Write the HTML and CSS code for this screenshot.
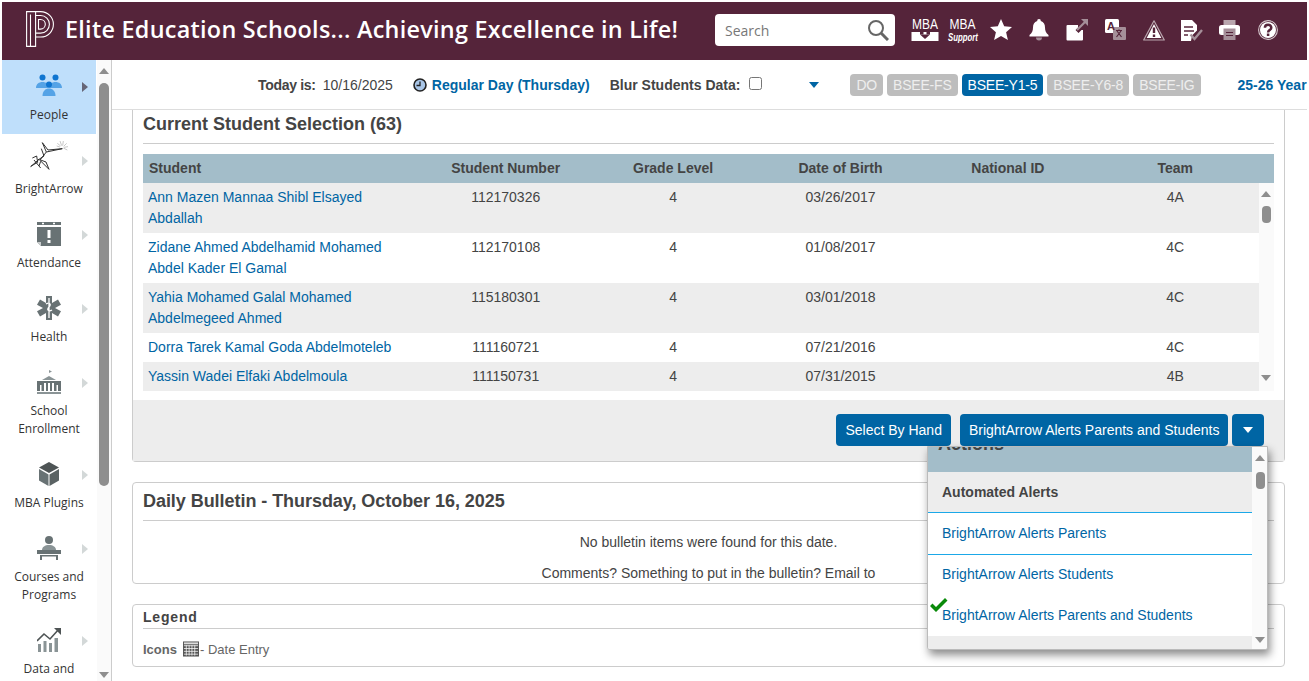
FILE: index.html
```html
<!DOCTYPE html>
<html lang="en">
<head>
<meta charset="utf-8">
<title>Elite Education Schools</title>
<link rel="stylesheet" href="styles.css">
</head>
<body>
<header class="header">
  <svg class="logo" viewBox="0 0 28 36" width="28" height="36" fill="none" stroke="#fff" stroke-width="1.100">
    <path d="M.6.6h9v34.800h-9z"/>
    <path d="M4.500 3.500v31.500"/>
    <path d="M9.600.6h5c7.300 0 12.800 5.700 12.800 12.700s-5.500 12.700-12.800 12.700h-5"/>
    <path d="M9.600 4.500h5c5 0 8.800 3.900 8.800 8.800s-3.800 8.800-8.800 8.800h-5"/>
    <path d="M12.500 8.500h2c2.700 0 4.800 2.100 4.800 4.800s-2.100 4.800-4.800 4.800h-2z"/>
  </svg>
  <h1 class="title">Elite Education Schools... Achieving Excellence in Life!</h1>
  <div class="search">
    <span>Search</span>
    <svg viewBox="0 0 22 22" width="22" height="22" fill="none" stroke="#666" stroke-width="2"><circle cx="9" cy="9" r="7"/><path d="M14 14l7 7" stroke-width="3"/></svg>
  </div>
  <nav class="tools">
    <span class="tool"><svg width="28" height="24" viewBox="0 0 28 24"><text x="1" y="9" transform="scale(1 1.250)" class="mba">MBA</text><path fill="#fff" d="M.5 14h8.500v2.500h3.500V14h3v2.500H19V14h8.500v9H.5z"/><path fill="#55243a" d="M9 16.500h10L14 21z"/></svg></span>
    <span class="tool"><svg width="31" height="24" viewBox="0 0 31 24"><text x="1.500" y="9" transform="scale(1 1.250)" class="mba">MBA</text><text x="0" y="17" transform="scale(1 1.350)" class="sup">Support</text></svg></span>
    <span class="tool"><svg width="22" height="22" viewBox="0 0 22 22"><path fill="#fff" d="M11 0l3.200 7.300 7.800.7-5.900 5.200 1.800 7.800L11 17l-6.900 4 1.800-7.800L0 8l7.800-.7z"/></svg></span>
    <span class="tool"><svg width="20" height="22" viewBox="0 0 20 22"><path fill="#fff" d="M10 0a1.800 1.800 0 011.800 2c3 .8 4.200 3.400 4.200 6.500 0 3.300 1 5.500 3.500 7.500v1.500H.5V16C3 14 4 11.800 4 8.500 4 5.400 5.200 2.800 8.200 2A1.800 1.800 0 0110 0z"/><path fill="#a58f99" d="M7 18.500h6a3 3 0 01-6 0z"/></svg></span>
    <span class="tool"><svg width="22" height="22" viewBox="0 0 22 22"><path fill="#fff" d="M1.500 6H12v2.500L9.500 11l3 3 3-3 1.500 0v9.500a1 1 0 01-1 1H1.500a1 1 0 01-1-1V7a1 1 0 011-1z"/><path fill="none" stroke="#a58f99" stroke-width="2.200" d="M11 11l8-8"/><path fill="#a58f99" d="M15 0h7v7z"/></svg></span>
    <span class="tool"><svg width="22" height="22" viewBox="0 0 22 22"><rect x="8" y="8" width="13" height="13" rx="1" fill="#a58f99"/><rect x="0" y="0" width="14" height="14" rx="1.500" fill="#fff"/><path fill="#a58f99" d="M8 8h6v6H8z"/><text x="6" y="11" text-anchor="middle" class="tr-a">A</text><path d="M11 11.500h6M14 10.500v1M12 12l4.500 6M16 12l-4.500 6" stroke="#55243a" stroke-width="1.200" fill="none"/></svg></span>
    <span class="tool"><svg width="22" height="21" viewBox="0 0 22 21"><path fill="none" stroke="#b9a6ae" stroke-width="1.200" stroke-linejoin="round" d="M11 .8L21.300 20H.7z"/><path fill="#fff" d="M11 4L18.300 18H3.700z"/><path fill="none" stroke="#55243a" stroke-width="2.400" d="M11 7.500v5.500M11 14.500v2.500"/></svg></span>
    <span class="tool"><svg width="22" height="21" viewBox="0 0 22 21"><path fill="#fff" d="M0 0h11l5 5v5.500l-5 5 -1 5.500H0z"/><path stroke="#55243a" stroke-width="1.500" d="M3 7h9M3 11h10M3 15h4"/><path fill="none" stroke="#a58f99" stroke-width="2.400" d="M9.500 14.500l4 4.500L21 10"/></svg></span>
    <span class="tool"><svg width="21" height="20" viewBox="0 0 21 20"><path fill="#b9a6ae" d="M4.500 0h12v6h-12z"/><rect y="5" width="21" height="10" rx="2.500" fill="#fff"/><path fill="#a58f99" d="M4.500 8.500h12V20h-12z"/><path stroke="#55243a" stroke-width="1.200" d="M7 12.500h7M7 15.500h7"/></svg></span>
    <span class="tool"><svg width="20" height="20" viewBox="0 0 20 20"><circle cx="10" cy="10" r="9.400" fill="none" stroke="#d5c8cd" stroke-width="1.100"/><circle cx="10" cy="10" r="8" fill="#fff"/><path fill="none" stroke="#55243a" stroke-width="2.500" d="M6.900 7.700c0-4 6.400-4 6.400 0 0 2.300-3.200 2.500-3.200 4.700"/><path stroke="#55243a" stroke-width="2.500" d="M10.100 13.500v2.500"/></svg></span>
  </nav>
</header>

<div class="shell">
  <aside class="side">
    <ul class="menu">
      <li class="item on">
        <div class="ico-row"><svg width="26" height="24" viewBox="0 0 26 24"><circle cx="6.500" cy="3.500" r="3" fill="#0f75d0"/><circle cx="19.500" cy="3.500" r="3" fill="#0f75d0"/><path fill="#55a3e6" d="M0 14c0-4 3-6 6.500-6S13 10 13 14zM13 14c0-4 3-6 6.500-6s6.500 2 6.500 6z"/><circle cx="13" cy="10.500" r="3" fill="#0f75d0"/><path fill="#55a3e6" d="M6.500 22c0-5 3-7.500 6.500-7.500s6.500 2.500 6.500 7.500z"/></svg><i class="arr"></i></div>
        <span>People</span>
      </li>
      <li class="item">
        <div class="ico-row"><svg class="ba" width="40" height="30" viewBox="25 15 120 90" fill="none" stroke="#222" stroke-width="2.800"><path d="M65 20L77 48 125 38 82 42z"/><path d="M62 38L70 60 52 72M77 48L58 72"/><path d="M30 92L55 70 85 100M35 66l13-6 3 19-21 12M60 72l16 6 9 22M40 72l20 24M55 90l5-14"/><path stroke="#aaa" stroke-width="2" d="M108 30l10 3M110 22l10 8M118 15l5 14M128 15l-2 14M138 22l-9 9M142 32l-12 2M140 42l-12-6"/></svg><i class="arr"></i></div>
        <span>BrightArrow</span>
      </li>
      <li class="item">
        <div class="ico-row"><svg width="24" height="24" viewBox="0 0 24 24"><path fill="#687274" d="M0 0h24v3H0zM0 5h24v19H4l-4-4z"/><path fill="#fff" d="M5 .8h2v1.500H5zM16 .8h2v1.500h-2zM10.500 8h3v8h-3zM10.500 18h3v3h-3z"/><path fill="#c9cdce" d="M0 20h4v4z"/></svg><i class="arr"></i></div>
        <span>Attendance</span>
      </li>
      <li class="item">
        <div class="ico-row"><svg width="24" height="24" viewBox="0 0 24 24"><path fill="#687274" d="M9 0h6v7l6-3.500 3 5.300-6 3.200 6 3.200-3 5.300-6-3.500v7H9v-7l-6 3.500-3-5.300 6-3.200L0 8.800l3-5.300 6 3.500z"/><path stroke="#fff" stroke-width="1.300" fill="none" d="M12 2v20M9 8c3-2 6 0 3 3s0 5 3 3"/></svg><i class="arr"></i></div>
        <span>Health</span>
      </li>
      <li class="item tall">
        <div class="ico-row"><svg width="24" height="24" viewBox="0 0 24 24"><path fill="#8a9496" d="M12 0l3 1.500-3 1.500v3l-7 4h14l-7-4z"/><path fill="#687274" d="M0 11h24v10H0z"/><path fill="#fff" d="M7 13h2v8H7zM11 13h2v8h-2zM15 13h2v8h-2zM3 15h1.500v6H3zM19.500 15H21v6h-1.500z"/><path fill="#8a9496" d="M0 22h24v2H0z"/></svg><i class="arr"></i></div>
        <span>School<br>Enrollment</span>
      </li>
      <li class="item">
        <div class="ico-row"><svg width="20" height="24" viewBox="0 0 20 24"><path fill="#4e5455" d="M10 0l10 5.500L10 11 0 5.500z"/><path fill="#687274" d="M0 7l9.500 5.500V24L0 18.500z"/><path fill="#5a6263" d="M20 7l-9.500 5.500V24L20 18.500z"/></svg><i class="arr"></i></div>
        <span>MBA Plugins</span>
      </li>
      <li class="item tall">
        <div class="ico-row"><svg width="24" height="24" viewBox="0 0 24 24"><circle cx="12" cy="4" r="4" fill="#687274"/><path fill="#8a9496" d="M5 14c0-3 3-5 7-5s7 2 7 5z"/><path fill="#687274" d="M0 14h24v4H0zM3 19h18v1.500H3zM3 20h2v4H3zM19 20h2v4h-2z"/></svg><i class="arr"></i></div>
        <span>Courses and<br>Programs</span>
      </li>
      <li class="item">
        <div class="ico-row"><svg width="24" height="24" viewBox="0 0 24 24"><path fill="#8a9496" d="M1 16h3v8H1zM6.500 13h3v11h-3zM12 15h3v9h-3zM17.500 10H21v14h-3.500z"/><path fill="none" stroke="#4e5455" stroke-width="1.600" d="M0 13l7-7 6 5 9-10"/><path fill="#4e5455" d="M17 0h7v7z"/></svg><i class="arr"></i></div>
        <span>Data and</span>
      </li>
    </ul>
    <div class="rail">
      <i class="sb-up"></i>
      <i class="thumb"></i>
      <i class="sb-down"></i>
    </div>
  </aside>

  <main class="main">
    <div class="topbar">
      <b class="today">Today is:</b><span class="date">10/16/2025</span>
      <svg class="clock" width="14" height="14" viewBox="0 0 14 14"><circle cx="7" cy="7" r="6" fill="#a9c6e8" stroke="#222" stroke-width="1.600"/><path d="M7 3.500V7.500H3.500" fill="none" stroke="#222" stroke-width="1.300"/></svg>
      <a class="day">Regular Day (Thursday)</a>
      <b class="blur">Blur Students Data:</b>
      <input class="check" type="checkbox" aria-label="Blur Students Data">
      <i class="tri"></i>
      <div class="pills">
        <span class="pill">DO</span><span class="pill">BSEE-FS</span><span class="pill active">BSEE-Y1-5</span><span class="pill">BSEE-Y6-8</span><span class="pill">BSEE-IG</span>
      </div>
      <a class="year">25-26 Year</a>
    </div>

    <section class="box selection">
      <div class="sel-body">
        <h2>Current Student Selection (63)</h2>
        <div class="thead">
          <span class="c-name">Student</span><span>Student Number</span><span>Grade Level</span><span>Date of Birth</span><span>National ID</span><span>Team</span>
        </div>
        <div class="tscroll">
          <div class="rows">
            <div class="row g"><a class="c-name">Ann Mazen Mannaa Shibl Elsayed Abdallah</a><span>112170326</span><span>4</span><span>03/26/2017</span><span></span><span>4A</span></div>
            <div class="row"><a class="c-name">Zidane Ahmed Abdelhamid Mohamed Abdel Kader El Gamal</a><span>112170108</span><span>4</span><span>01/08/2017</span><span></span><span>4C</span></div>
            <div class="row g"><a class="c-name">Yahia Mohamed Galal Mohamed Abdelmegeed Ahmed</a><span>115180301</span><span>4</span><span>03/01/2018</span><span></span><span>4C</span></div>
            <div class="row"><a class="c-name">Dorra Tarek Kamal Goda Abdelmoteleb</a><span>111160721</span><span>4</span><span>07/21/2016</span><span></span><span>4C</span></div>
            <div class="row g"><a class="c-name">Yassin Wadei Elfaki Abdelmoula</a><span>111150731</span><span>4</span><span>07/31/2015</span><span></span><span>4B</span></div>
          </div>
          <div class="mini"><i class="sb-up"></i><i class="mini-thumb"></i><i class="sb-down"></i></div>
        </div>
      </div>
      <div class="sel-foot">
        <button class="btn first">Select By Hand</button>
        <button class="btn">BrightArrow Alerts Parents and Students</button>
        <button class="btn caret" aria-label="More"><i></i></button>
      </div>
    </section>

    <section class="box bulletin">
      <h2>Daily Bulletin - Thursday, October 16, 2025</h2>
      <p>No bulletin items were found for this date.</p>
      <p>Comments? Something to put in the bulletin? Email to</p>
    </section>

    <section class="box legend">
      <h3>Legend</h3>
      <div class="legend-row"><b>Icons</b>
        <svg width="16" height="16" viewBox="0 0 17 16"><path fill="#555" d="M0 0h17v16H0z"/><path fill="#ddd" d="M1 1h15v2H1z"/><path stroke="#fff" stroke-width=".8" d="M1 4.500h15M1 7.500h15M1 10.500h15M1 13.500h15M3.500 4v11M6.500 4v11M9.500 4v11M12.500 4v11"/></svg><span>- Date Entry</span>
      </div>
    </section>

    <div class="popup">
      <div class="pop-list">
        <div class="pop-head"><b>Actions</b></div>
        <div class="pop-group">Automated Alerts</div>
        <a class="pop-item one">BrightArrow Alerts Parents</a>
        <a class="pop-item">BrightArrow Alerts Students</a>
        <a class="pop-item last"><svg width="18" height="15" viewBox="0 0 18 15"><path fill="#0a8a0a" d="M0 8l2.500-2.500L6 9l9-9 2.500 2.500L6 14z"/></svg>BrightArrow Alerts Parents and Students</a>
        <div class="pop-end"></div>
      </div>
      <div class="mini tall-mini"><i class="sb-up"></i><i class="mini-thumb"></i><i class="sb-down"></i></div>
    </div>
  </main>
</div>
</body>
</html>
```
FILE: styles.css
```css
* { box-sizing: border-box; }
html, body { margin: 0; height: 100%; overflow: hidden; background: #fff; }
body { font: 14px "Liberation Sans", Arial, sans-serif; color: #444; }

.header { height: 58px; margin: 2px 2px 0 2px; background: #55243a; display: flex; align-items: center; padding: 0 0 2px 24px; }
.logo { flex: none; margin-bottom: 2px; }
.title { flex: none; margin: 0 0 2px 11px; width: 650px; font: 600 23.4px "Open Sans", sans-serif; color: #fff; white-space: nowrap; letter-spacing: .27px; }
.search { flex: none; width: 180px; height: 32px; background: #fff; border-radius: 4px; display: flex; align-items: center; justify-content: space-between; padding: 0 6px 0 10px; font: 14px "Open Sans", sans-serif; color: #777; }
.tools { flex: none; display: flex; margin-left: 11px; }
.tool { width: 38.1px; height: 32px; display: flex; align-items: center; justify-content: center; }
.tool svg { overflow: visible; }
.mba { font: 12px "Liberation Sans", sans-serif; fill: #fff; }
.sup { font: italic bold 7.8px "Liberation Sans", sans-serif; fill: #fff; }
.tr-a { font: bold 11px "Liberation Sans", sans-serif; fill: #55243a; }

.shell { display: flex; height: 621px; margin-right: 2px; }
.side { flex: none; width: 112px; display: flex; border-right: 1px solid #ccc; overflow: hidden; }
.menu { list-style: none; margin: 0 0 0 2px; padding: 0; width: 94px; }
.item { height: 74px; font: 12px/18px "Open Sans", sans-serif; color: #333; text-align: center; }
.item.tall { height: 92px; }
.item.on { background: #bfdffb; }
.ico-row { height: 46px; position: relative; display: flex; align-items: center; justify-content: center; padding-top: 6px; }
.ba { margin-bottom: 8px; }
.arr { position: absolute; left: 80px; top: 22px; border: 5px solid transparent; border-left: 6px solid #d3d8d8; border-right: 0; }
.on .arr { border-left-color: #667; }
.item span { display: block; }

.rail { width: 14px; margin-left: 1px; background: #fafafa; position: relative; flex: none; }
.rail .thumb { position: absolute; left: 2px; top: 23px; width: 10px; height: 403px; border-radius: 5px; background: #8e8e8e; }
.sb-up, .sb-down { position: absolute; left: 2px; border: 5px solid transparent; }
.sb-up { top: 8px; border-bottom: 6px solid #8e8e8e; border-top: 0; }
.sb-down { bottom: 3px; border-top: 6px solid #8e8e8e; border-bottom: 0; }

.main { flex: 1; min-width: 0; position: relative; overflow: hidden; }
.topbar { height: 50px; border-bottom: 1px solid #ddd; display: flex; align-items: center; padding: 0 0 0 146px; white-space: nowrap; }
.topbar > * { flex: none; }
.today { margin-right: 7px; letter-spacing: -.3px; }
.date { margin-right: 20px; }
.clock { margin-right: 5px; }
.day, .year { color: #0065a4; font-weight: 700; }
.blur { margin-left: 20px; margin-right: 9px; }
.check { margin: -3px 0 0; width: 13px; height: 13px; }
.tri { margin-left: 47px; border: 5px solid transparent; border-top: 6px solid #0065a4; border-bottom: 0; }
.pills { display: flex; gap: 4px; margin-left: 31px; }
.pill { height: 22px; line-height: 22px; padding: 0 6px; border-radius: 4px; background: #bdbdbd; color: #eee; letter-spacing: -.2px; }
.pill.active { background: #0065a4; color: #fff; }
.year { margin-left: 37px; }

.box { margin: 0 22px 0 20px; border: 1px solid #ccc; border-radius: 4px; }
.selection { border-top: 0; border-radius: 0 0 4px 4px; height: 352px; background: #fff; }
.sel-body { height: 290px; padding: 0 10px; }
h2 { margin: 0; font: bold 18px "Liberation Sans", sans-serif; color: #444; }
.sel-body h2 { height: 34px; line-height: 29px; border-bottom: 1px solid #ccc; }
.thead { margin-top: 10px; height: 29px; padding-bottom: 2px; background: #a3bdc9; display: grid; grid-template-columns: 279px repeat(5, 167.4px) 15px; align-items: center; text-align: center; font-weight: 700; }
.thead .c-name { text-align: left; padding-left: 6px; }
.tscroll { display: flex; height: 208px; position: relative; }
.rows { flex: 1; min-width: 0; }
.row { display: grid; grid-template-columns: 279px repeat(5, 167.4px); text-align: center; line-height: 21px; padding: 4px 0; }
.row.g { background: #ededed; }
.row .c-name { text-align: left; padding: 0 30px 0 5px; color: #0065a4; }
.mini { width: 15px; flex: none; position: relative; background: #fafafa; }
.mini-thumb { position: absolute; left: 3px; top: 23px; width: 9px; height: 17px; border-radius: 4px; background: #8e8e8e; }
.mini .sb-up { top: 8px; left: 2px; }
.mini .sb-down { bottom: 10px; left: 2px; }
.tall-mini .sb-up, .tall-mini .sb-down { left: 3px; }
.tall-mini .sb-down { bottom: 6px; }
.tall-mini .mini-thumb { top: 25px; left: 4px; }

.sel-foot { height: 61px; background: #ededed; display: flex; justify-content: flex-end; align-items: flex-start; gap: 4px; padding: 14px 20px 0 0; }
.btn { flex: none; height: 32px; padding: 0 8.5px; border: 0; border-radius: 4px; background: #0065a4; color: #fff; font: 14px "Liberation Sans", sans-serif; }
.btn.first { padding: 0 9.5px; margin-right: 5px; }
.btn.caret { width: 32px; padding: 0; display: flex; align-items: center; justify-content: center; }
.btn.caret i { border: 5px solid transparent; border-top: 6px solid #fff; border-bottom: 0; }

.bulletin { margin-top: 20px; height: 102px; padding: 0 10px; text-align: center; }
.bulletin h2 { height: 38px; line-height: 36px; border-bottom: 1px solid #ccc; text-align: left; letter-spacing: -.05px; margin-bottom: 6px; }
.bulletin p { margin: 0; line-height: 31px; }
.legend { margin-top: 20px; height: 63px; padding: 0 10px; }
h3 { margin: 0; height: 24px; font: bold 14px/25px "Liberation Sans", sans-serif; border-bottom: 1px solid #ccc; letter-spacing: .8px; }
.legend-row { display: flex; align-items: center; height: 40px; font-size: 13px; color: #666; }
.legend-row svg { margin-left: 6px; margin-right: 1px; }

.popup { position: absolute; left: 815px; top: 386px; width: 341px; height: 204px; display: flex; background: #fff; border: 1px solid #bbb; border-radius: 0 0 3px 3px; box-shadow: 2px 5px 9px rgba(0,0,0,.45); overflow: hidden; }
.pop-list { flex: 1; min-width: 0; }
.pop-head { height: 25px; background: #a3bdc9; overflow: hidden; position: relative; }
.pop-head b { position: absolute; left: 10px; top: -13px; font-size: 18px; line-height: 21px; white-space: nowrap; }
.pop-group { height: 41px; line-height: 41px; background: #ededed; padding-left: 14px; font-weight: 700; border-bottom: 1px solid #1ba8e8; }
.pop-item { display: block; height: 41px; line-height: 39px; padding-left: 14px; color: #0065a4; position: relative; }
.pop-item.one { height: 42px; line-height: 40px; border-bottom: 1px solid #1ba8e8; }
.pop-item.last { height: 40px; }
.pop-item svg { position: absolute; left: 2px; top: 2px; }
.pop-end { height: 14px; background: #ededed; }
```
